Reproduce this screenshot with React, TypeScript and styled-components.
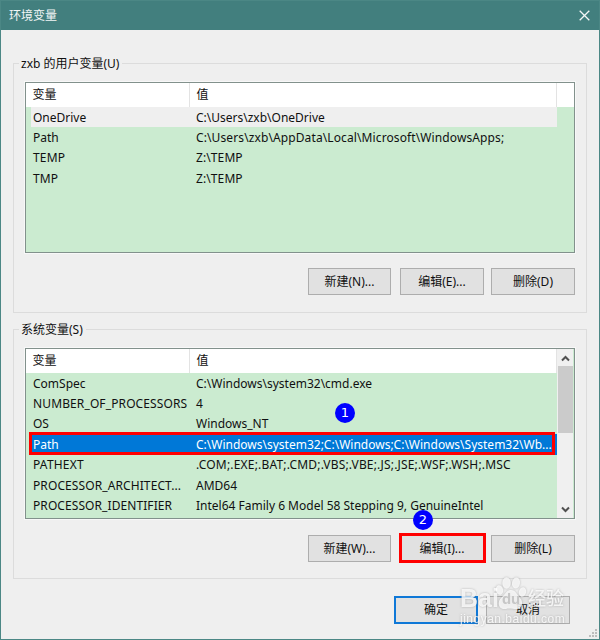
import React from "react";
import styled, { createGlobalStyle, css } from "styled-components";

const GlobalStyle = createGlobalStyle`
  * { box-sizing: border-box; }
  body { margin: 0; }
`;

const Dialog = styled.div`
  position: relative;
  width: 600px;
  height: 640px;
  overflow: hidden;
  display: flex;
  flex-direction: column;
  border: 1px solid #4b8785;
  background: #efefef;
  color: #101010;
  font: 12px/16px "Noto Sans", "Noto Sans CJK SC", sans-serif;
  white-space: pre;
`;

const TitleBar = styled.header`
  height: 29px;
  flex: none;
  display: flex;
  align-items: center;
  justify-content: space-between;
  padding: 0 9px 0 8px;
  background: #427f7e;
  color: #f2f6f6;
`;

const Group = styled.section<{ $gap: number }>`
  flex: none;
  height: 250px;
  margin: ${(p) => p.$gap}px 12px 0 12px;
  border: 1px solid #dcdcdc;
  display: flex;
  flex-direction: column;
  align-items: flex-start;
  padding: 0 11px;
`;

const Legend = styled.div`
  height: 16px;
  margin: -8px 0 10px -6px;
  padding: 0 3px 0 2px;
  background: #efefef;
`;

const ListBox = styled.div`
  align-self: stretch;
  height: 171px;
  flex: none;
  display: flex;
  border: 1px solid #82918c;
  background: #cbebd0;
  box-shadow: 0 0 0 1px #f8f8f8;
`;

const Table = styled.div`
  flex: 1;
  min-width: 0;
`;

const HeaderRow = styled.div`
  display: flex;
  height: 24px;
  background: #fff;
  align-items: stretch;
`;

const HeaderCell = styled.div<{ $width: number }>`
  width: ${(p) => p.$width}px;
  padding: 4px 0 0 6.5px;
  border-right: 1px solid #e3e3e3;
`;

const Row = styled.div<{ $state?: "hover" | "selected" }>`
  position: relative;
  display: flex;
  align-items: center;
  height: 20.4px;
  margin-left: 5px;
  padding-top: 1px;
  width: 526px;
  ${(p) => p.$state === "hover" && css`background: #efefef;`}
  ${(p) => p.$state === "selected" && css`background: #0078d7; color: #fff;`}
`;

const Cell = styled.div<{ $width: number; $tracking: number }>`
  width: ${(p) => p.$width}px;
  padding-left: 2px;
  letter-spacing: ${(p) => p.$tracking}px;
`;

const RowMark = styled.div`
  position: absolute;
  left: -2px;
  top: -2px;
  width: 526px;
  height: 23px;
  border: 3px solid #f00;
`;

const ScrollBar = styled.div`
  width: 16px;
  margin-right: 1px;
  display: flex;
  flex-direction: column;
  align-items: center;
  justify-content: space-between;
  background: #f0f0f0;
`;

const ScrollStart = styled.div`
  width: 15px;
  display: flex;
  flex-direction: column;
  align-items: center;
`;

const Thumb = styled.div`
  width: 15px;
  height: 67px;
  background: #cbcbcb;
`;

const ButtonRow = styled.div<{ $top: number }>`
  align-self: flex-end;
  display: flex;
  margin-top: ${(p) => p.$top}px;
`;

const Button = styled.button<{ $left?: number; $width?: number; $height?: number; $primary?: boolean }>`
  position: relative;
  width: ${(p) => p.$width ?? 84}px;
  height: ${(p) => p.$height ?? 27}px;
  margin: 0 0 0 ${(p) => p.$left ?? 0}px;
  padding: 0;
  border: ${(p) => (p.$primary ? "2px solid #0f78d7" : "1px solid #adadad")};
  background: #e1e1e1;
  color: inherit;
  font: inherit;
`;

const ButtonMark = styled.span`
  position: absolute;
  inset: -3px -3px -2px -2px;
  border: 3px solid #f00;
`;

const Footer = styled.footer`
  display: flex;
  margin: 17px 0 0 393px;
`;

const Step = styled.span<{ $x: number; $y: number }>`
  position: absolute;
  left: ${(p) => p.$x}px;
  top: ${(p) => p.$y}px;
  width: 20px;
  height: 20px;
  border-radius: 50%;
  background: #00f;
  color: #fff;
  text-align: center;
  font: 13px/20px "DejaVu Sans", sans-serif;
`;

const Watermark = styled.div`
  position: absolute;
  left: 459px;
  top: 572px;
  width: 110px;
  height: 54px;
  color: rgba(255, 255, 255, 0.8);
  filter: drop-shadow(0 0 1px rgba(110, 110, 110, 0.55));
  pointer-events: none;
`;

const Brand = styled.div`
  display: flex;
  align-items: flex-end;
  height: 38px;
  font: bold 25px/26px "Liberation Sans", sans-serif;
`;

const PawBox = styled.span`
  position: relative;
  width: 32px;
  height: 36px;
  margin-left: -4px;
`;

const Du = styled.span`
  position: absolute;
  left: 7px;
  top: 14px;
  color: #c6c6c6;
  font: bold 15px/20px "Liberation Sans", sans-serif;
`;

const BrandCjk = styled.span`
  margin-left: 1px;
  font: 500 18px/27px "Noto Sans CJK SC", sans-serif;
`;

const Site = styled.div`
  margin-top: 1px;
  font: 12px/14px "Liberation Sans", sans-serif;
  letter-spacing: 0.5px;
`;

const Grip = styled.svg`
  position: absolute;
  right: 1px;
  bottom: 1px;
`;

type Item = { name: string; value: string; nt?: number; vt?: number; state?: "hover" | "selected" };

const userVars: Item[] = [
  { name: "OneDrive", value: "C:\\Users\\zxb\\OneDrive", state: "hover" },
  { name: "Path", value: "C:\\Users\\zxb\\AppData\\Local\\Microsoft\\WindowsApps;", vt: 0.11 },
  { name: "TEMP", value: "Z:\\TEMP", vt: 0.1, nt: 0.15 },
  { name: "TMP", value: "Z:\\TEMP", vt: 0.1, nt: 0.15 },
];

const systemVars: Item[] = [
  { name: "ComSpec", value: "C:\\Windows\\system32\\cmd.exe" },
  { name: "NUMBER_OF_PROCESSORS", value: "4", nt: 0.12 },
  { name: "OS", value: "Windows_NT" },
  { name: "Path", value: "C:\\Windows\\system32;C:\\Windows;C:\\Windows\\System32\\Wb...", state: "selected" },
  { name: "PATHEXT", value: ".COM;.EXE;.BAT;.CMD;.VBS;.VBE;.JS;.JSE;.WSF;.WSH;.MSC", nt: 0.2, vt: 0.18 },
  { name: "PROCESSOR_ARCHITECT...", value: "AMD64", nt: 0.1 },
  { name: "PROCESSOR_IDENTIFIER", value: "Intel64 Family 6 Model 58 Stepping 9, GenuineIntel", nt: 0.08 },
];

const Chevron = ({ down }: { down?: boolean }) => (
  <svg width="15" height="17" viewBox="0 0 15 17" fill="none" stroke="#505050" strokeWidth="2">
    <path d={down ? "M4 6.5 7.5 10 11 6.5" : "M4 11.5 7.5 8 11 11.5"} />
  </svg>
);

const VariableTable = ({ items }: { items: Item[] }) => (
  <Table>
    <HeaderRow>
      <HeaderCell $width={164}>变量</HeaderCell>
      <HeaderCell $width={367}>值</HeaderCell>
    </HeaderRow>
    {items.map((v) => (
      <Row key={v.name} $state={v.state}>
        <Cell $width={163} $tracking={v.nt ?? 0}>{v.name}</Cell>
        <Cell $width={363} $tracking={v.vt ?? 0}>{v.value}</Cell>
        {v.state === "selected" && <RowMark />}
      </Row>
    ))}
  </Table>
);

const Paw = () => (
  <svg width="32" height="36" viewBox="0 0 32 36" fill="currentColor">
    <ellipse cx="4.5" cy="15" rx="3.6" ry="4.8" transform="rotate(-15 4.5 15)" />
    <ellipse cx="11.5" cy="8" rx="4.2" ry="5.7" />
    <ellipse cx="21" cy="8" rx="4" ry="5.5" transform="rotate(8 21 8)" />
    <ellipse cx="27.5" cy="17" rx="3.6" ry="4.8" transform="rotate(15 27.5 17)" />
    <path d="M16 15c5 0 6 5 9 8 4 4 2 11-4 11-3 0-7-1-10 0-8 1-9-7-5-11 4-3 5-8 10-8Z" />
  </svg>
);

export default function App() {
  return (
    <>
      <GlobalStyle />
      <Dialog>
        <TitleBar>
          <span>环境变量</span>
          <svg width="11" height="11" viewBox="0 0 11 11" stroke="#f4f7f7" strokeWidth="1.3">
            <path d="M.7.7 10.3 10.3M10.3.7.7 10.3" />
          </svg>
        </TitleBar>
        <Group $gap={33}>
          <Legend>zxb 的用户变量(U)</Legend>
          <ListBox>
            <VariableTable items={userVars} />
          </ListBox>
          <ButtonRow $top={15}>
            <Button $width={83}>新建(N)...</Button>
            <Button $left={9}>编辑(E)...</Button>
            <Button $left={7}>删除(D)</Button>
          </ButtonRow>
        </Group>
        <Group $gap={16}>
          <Legend>系统变量(S)</Legend>
          <ListBox>
            <VariableTable items={systemVars} />
            <ScrollBar>
              <ScrollStart>
                <Chevron />
                <Thumb />
              </ScrollStart>
              <Chevron down />
            </ScrollBar>
          </ListBox>
          <ButtonRow $top={16}>
            <Button $width={83}>新建(W)...</Button>
            <Button $left={9}>编辑(I)...<ButtonMark /></Button>
            <Button $left={7}>删除(L)</Button>
          </ButtonRow>
        </Group>
        <Footer>
          <Button $primary $height={28}>确定</Button>
          <Button $left={8} $height={28}>取消</Button>
        </Footer>
        <Step $x={334} $y={402}>1</Step>
        <Step $x={412} $y={509}>2</Step>
        <Watermark>
          <Brand>Bai<PawBox><Paw /><Du>du</Du></PawBox><BrandCjk>经验</BrandCjk></Brand>
          <Site>jingyan.baidu.com</Site>
        </Watermark>
        <Grip width="10" height="10" fill="#bdbdbd">
          <path d="M7 1h2v2H7zM4 4h2v2H4zM7 4h2v2H7zM1 7h2v2H1zM4 7h2v2H4zM7 7h2v2H7z" />
        </Grip>
      </Dialog>
    </>
  );
}
